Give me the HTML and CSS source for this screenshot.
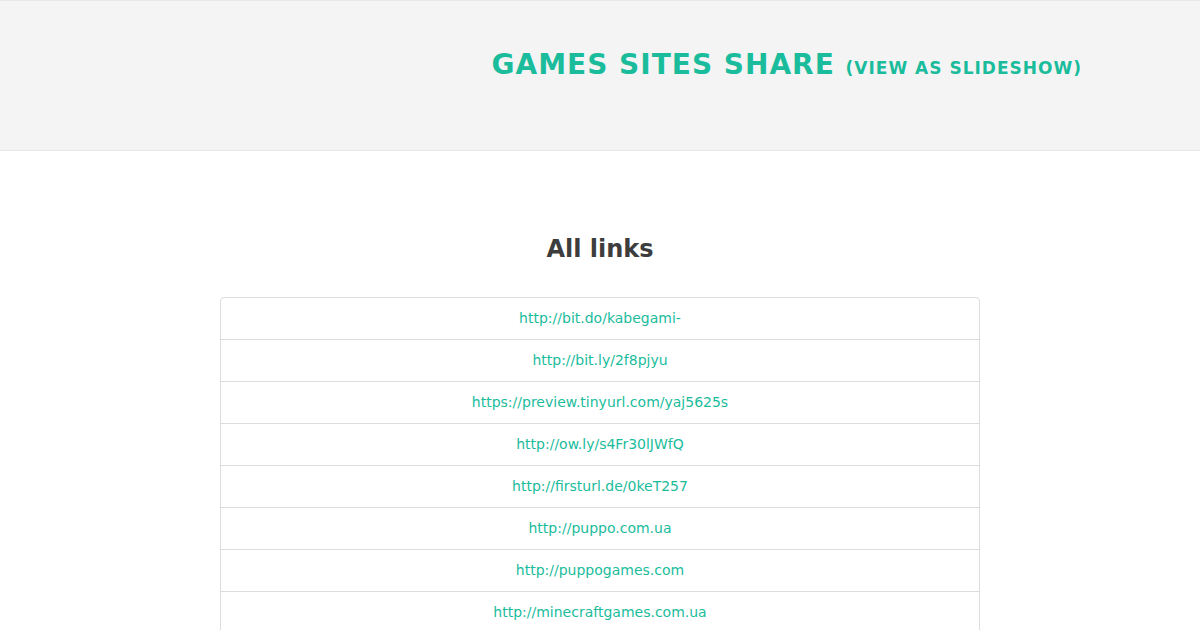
FILE: index.html
```html
<!DOCTYPE html>
<html>
<head>
    <title>Games Sites Share</title>
    <link rel="stylesheet" href="styles.css">
</head>
<body>
    <header class="site-header">
        <div class="header-inner">
            <h1 class="site-title">Games Sites Share <a class="slideshow-link" href="#">(View as slideshow)</a></h1>
        </div>
    </header>

    <main class="content">
        <h2 class="section-title">All links</h2>
        <ul class="link-list">
            <li><a href="#">http://bit.do/kabegami-</a></li>
            <li><a href="#">http://bit.ly/2f8pjyu</a></li>
            <li><a href="#">https://preview.tinyurl.com/yaj5625s</a></li>
            <li><a href="#">http://ow.ly/s4Fr30lJWfQ</a></li>
            <li><a href="#">http://firsturl.de/0keT257</a></li>
            <li><a href="#">http://puppo.com.ua</a></li>
            <li><a href="#">http://puppogames.com</a></li>
            <li><a href="#">http://minecraftgames.com.ua</a></li>
        </ul>
    </main>
</body>
</html>
```

FILE: styles.css
```css
/* General Styles */
body {
    font-family: "DejaVu Sans", sans-serif;
    background-color: #fff;
    margin: 0;
    padding: 0;
    color: #3d3d3d;
}
a {
    color: #1abc9c;
    text-decoration: none;
}
/* Header */
.site-header {
    background-color: #f4f4f4;
    border-top: 1px solid #e8e8e8;
    border-bottom: 1px solid #e6e6e6;
    height: 149px;
}
.header-inner {
    max-width: 964px;
    margin: 0 auto;
    padding-top: 47px;
    text-align: right;
}
.site-title {
    margin: 0;
    font-size: 28px;
    font-weight: bold;
    letter-spacing: 1px;
    text-transform: uppercase;
    color: #1abc9c;
}
.slideshow-link {
    font-size: 17px;
    letter-spacing: 1px;
}
/* Links */
.content {
    padding-top: 84px;
}
.section-title {
    margin: 0 0 34px;
    text-align: center;
    font-size: 24px;
    font-weight: bold;
    color: #3d3d3d;
}
.link-list {
    list-style: none;
    box-sizing: border-box;
    margin: 0 auto;
    padding: 0;
    width: 760px;
    border: 1px solid #ddd;
    border-radius: 4px;
}
.link-list li {
    height: 41px;
    line-height: 41px;
    text-align: center;
    font-size: 14px;
    border-top: 1px solid #ddd;
}
.link-list li:first-child {
    border-top: none;
}
```
